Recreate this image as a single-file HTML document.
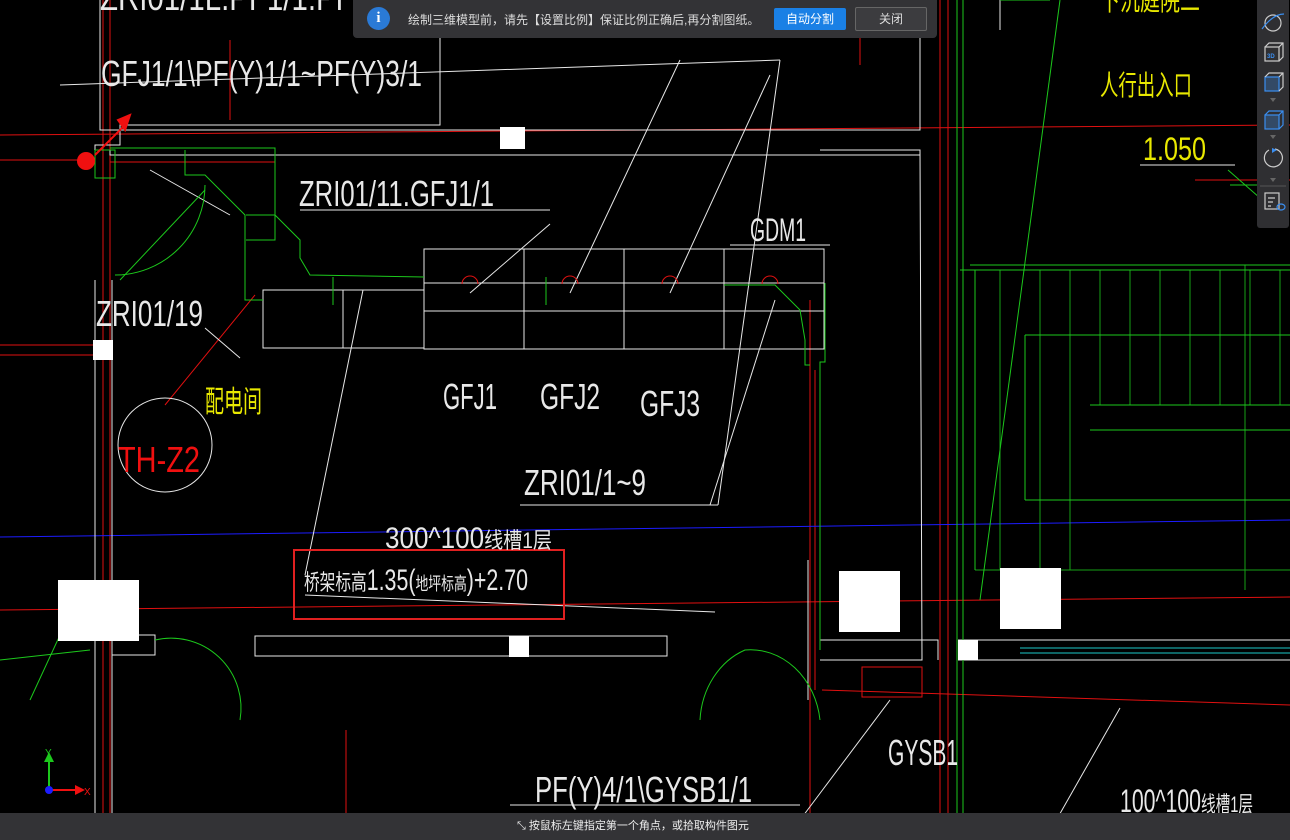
<!DOCTYPE html>
<html><head><meta charset="utf-8"><style>
body{margin:0;width:1290px;height:840px;overflow:hidden;background:#000;font-family:"Liberation Sans","Noto Sans CJK SC",sans-serif}
svg{position:absolute;left:0;top:0}
.t{font-family:"Liberation Sans","Noto Sans CJK SC",sans-serif}
</style></head><body>
<svg width="1290" height="840" viewBox="0 0 1290 840">
<rect width="1290" height="840" fill="#000"/>
<g fill="none" stroke-width="1">
<g stroke="#e01010">
<line x1="0" y1="135" x2="1290" y2="125"/>
<line x1="0" y1="160" x2="95" y2="160"/>
<line x1="0" y1="610" x2="1290" y2="597"/>
<line x1="0" y1="345" x2="95" y2="345"/>
<line x1="0" y1="355" x2="95" y2="355"/>
<line x1="103" y1="0" x2="103" y2="840"/>
<line x1="110" y1="0" x2="110" y2="840"/>
<line x1="185" y1="150" x2="185" y2="165"/>
<line x1="275" y1="160" x2="275" y2="240"/>
<line x1="110" y1="162" x2="275" y2="162"/>
<line x1="255" y1="295" x2="165" y2="405"/>
<line x1="810" y1="300" x2="810" y2="840"/>
<line x1="815" y1="370" x2="815" y2="690"/>
<line x1="822" y1="690" x2="1290" y2="705"/>
<line x1="860" y1="0" x2="860" y2="65"/>
<line x1="940" y1="0" x2="940" y2="840"/>
<line x1="948" y1="0" x2="948" y2="840"/>
<line x1="1195" y1="180" x2="1290" y2="180"/>
<line x1="346" y1="730" x2="346" y2="840"/>
<line x1="230" y1="40" x2="230" y2="120"/>
<rect x="862" y="667" width="60" height="30"/>
</g>
<line x1="0" y1="537" x2="1290" y2="520" stroke="#1c1cff"/>
<g stroke="#e8e8e8">
<polyline points="95,175 95,145 120,145 120,125 440,125 440,20"/>
<polyline points="100,0 100,130 920,130 920,20"/>
<polyline points="95,280 95,840"/>
<polyline points="112,280 112,600"/>
<polyline points="112,640 112,840"/>
<polyline points="95,635 155,635 155,655 112,655"/>
<rect x="255" y="636" width="412" height="20"/>
<polyline points="820,150 920,150 922,660 820,660"/>
<polyline points="110,150 110,155 920,155"/>
<polyline points="820,640 938,640 938,660"/>
<rect x="424" y="249" width="400" height="100"/>
<line x1="524" y1="249" x2="524" y2="349"/>
<line x1="624" y1="249" x2="624" y2="349"/>
<line x1="724" y1="249" x2="724" y2="349"/>
<rect x="263" y="290" width="161" height="58"/>
<line x1="343" y1="290" x2="343" y2="348"/>
<line x1="424" y1="311" x2="824" y2="311"/>
<line x1="424" y1="283" x2="824" y2="283"/>
<line x1="60" y1="85" x2="780" y2="60"/>
<line x1="780" y1="60" x2="718" y2="505"/>
<line x1="718" y1="505" x2="520" y2="505"/>
<line x1="300" y1="210" x2="550" y2="210"/>
<line x1="550" y1="224" x2="470" y2="293"/>
<line x1="680" y1="60" x2="570" y2="293"/>
<line x1="770" y1="75" x2="670" y2="293"/>
<line x1="730" y1="245" x2="830" y2="245"/>
<line x1="775" y1="300" x2="710" y2="505"/>
<line x1="363" y1="290" x2="305" y2="575"/>
<line x1="150" y1="170" x2="230" y2="215"/>
<line x1="205" y1="328" x2="240" y2="358"/>
<line x1="305" y1="595" x2="715" y2="612"/>
<line x1="510" y1="805" x2="800" y2="805"/>
<line x1="800" y1="820" x2="890" y2="700"/>
<line x1="1045" y1="840" x2="1120" y2="708"/>
<line x1="808" y1="560" x2="808" y2="700"/>
<line x1="1000" y1="0" x2="1000" y2="30"/>
<line x1="1140" y1="165" x2="1235" y2="165"/>
<polyline points="958,640 1290,640"/>
<polyline points="958,660 1290,660"/>
<line x1="855" y1="0" x2="937" y2="0"/>
</g>
<circle cx="165" cy="445" r="47" stroke="#e8e8e8"/>
<g stroke="#1cc81c">
<polyline points="95,150 95,178 115,178 115,150 95,150"/>
<polyline points="110,148 275,148 275,215 300,240 300,258 310,275 424,277"/>
<polyline points="185,150 185,175 205,175 245,215 245,300 263,300"/>
<polyline points="246,215 275,215 275,240 246,240"/>
<polyline points="825,283 825,362 820,362 820,650"/>
<polyline points="724,285 775,285 800,310 805,340 805,365 810,365"/>
<line x1="333" y1="277" x2="333" y2="305"/>
<line x1="546" y1="277" x2="546" y2="305"/>
<line x1="1060" y1="0" x2="980" y2="600"/>
<line x1="960" y1="270" x2="1290" y2="270"/>
<line x1="970" y1="265" x2="1290" y2="265"/>
<line x1="975" y1="270" x2="975" y2="570"/>
<line x1="1025" y1="335" x2="1290" y2="335"/>
<line x1="1025" y1="335" x2="1025" y2="500"/>
<line x1="1025" y1="500" x2="1290" y2="500"/>
<line x1="1090" y1="405" x2="1290" y2="405"/>
<line x1="1090" y1="430" x2="1290" y2="430"/>
<line x1="1228" y1="170" x2="1260" y2="198"/>
<line x1="1230" y1="185" x2="1257" y2="185"/>
<line x1="957" y1="0" x2="957" y2="840"/>
<line x1="963" y1="0" x2="963" y2="840"/>
<path d="M115 275 A90 90 0 0 0 205 185"/>
<path d="M120 280 L205 190"/>
<path d="M0 660 L90 650"/>
<path d="M30 700 L60 635"/>
<path d="M155 640 A70 70 0 0 1 240 720"/>
<path d="M700 720 A70 80 0 0 1 745 650 A70 80 0 0 1 820 720"/>
<path d="M1000 0 L1050 0"/>
</g>
<g stroke="#1cc81c" opacity=".8">
<line x1="1000" y1="270" x2="1000" y2="570"/>
<line x1="1040" y1="270" x2="1040" y2="570"/>
<line x1="1070" y1="270" x2="1070" y2="570"/>
<line x1="1100" y1="270" x2="1100" y2="405"/>
<line x1="1130" y1="270" x2="1130" y2="405"/>
<line x1="1160" y1="270" x2="1160" y2="405"/>
<line x1="1190" y1="270" x2="1190" y2="405"/>
<line x1="1220" y1="270" x2="1220" y2="405"/>
<line x1="1250" y1="270" x2="1250" y2="405"/>
<line x1="1280" y1="270" x2="1280" y2="405"/>
<line x1="1245" y1="265" x2="1245" y2="590"/>
<line x1="975" y1="570" x2="1290" y2="570"/>
</g>
<line x1="1020" y1="648" x2="1290" y2="648" stroke="#1cc8c8"/>
<line x1="1020" y1="653" x2="1290" y2="653" stroke="#1cc8c8"/>
<g stroke="#e01010">
<path d="M462 284 A8 8 0 1 1 478 284"/>
<path d="M562 284 A8 8 0 1 1 578 284"/>
<path d="M662 284 A8 8 0 1 1 678 284"/>
<path d="M762 284 A8 8 0 1 1 778 284"/>
</g>
<rect x="294" y="550" width="270" height="69" stroke="#e02020" stroke-width="2"/>
</g>
<g fill="#fff">
<rect x="500" y="127" width="25" height="22"/>
<rect x="93" y="340" width="20" height="20"/>
<rect x="58" y="580" width="81" height="61"/>
<rect x="509" y="636" width="20" height="21"/>
<rect x="839" y="571" width="61" height="61"/>
<rect x="1000" y="568" width="61" height="61"/>
<rect x="958" y="640" width="20" height="20"/>
</g>
<circle cx="86" cy="161" r="9" fill="#f01010"/>
<path d="M95 155 L125 125 M118 120 L130 115 L125 130 Z" stroke="#f01010" fill="#f01010" stroke-width="2"/>
<g class="t" fill="#e8e8e8" font-size="36" lengthAdjust="spacingAndGlyphs">
<text x="101" y="86" textLength="321" lengthAdjust="spacingAndGlyphs">GFJ1/1\PF(Y)1/1~PF(Y)3/1</text>
<text x="299" y="206" textLength="195" lengthAdjust="spacingAndGlyphs">ZRI01/11.GFJ1/1</text>
<text x="750" y="241" font-size="32" textLength="56" lengthAdjust="spacingAndGlyphs">GDM1</text>
<text x="96" y="326" textLength="107" lengthAdjust="spacingAndGlyphs">ZRI01/19</text>
<text x="443" y="409" textLength="54" lengthAdjust="spacingAndGlyphs">GFJ1</text>
<text x="540" y="409" textLength="60" lengthAdjust="spacingAndGlyphs">GFJ2</text>
<text x="640" y="416" textLength="60" lengthAdjust="spacingAndGlyphs">GFJ3</text>
<text x="524" y="495" textLength="122" lengthAdjust="spacingAndGlyphs">ZRI01/1~9</text>
<text x="385" y="548" font-size="30" textLength="167" lengthAdjust="spacingAndGlyphs">300^100<tspan font-size="22">线槽1层</tspan></text>
<text x="304" y="590" font-size="30" textLength="224" lengthAdjust="spacingAndGlyphs"><tspan font-size="22">桥架标高</tspan>1.35(<tspan font-size="18">地坪标高</tspan>)+2.70</text>
<text x="888" y="765" textLength="70" lengthAdjust="spacingAndGlyphs">GYSB1</text>
<text x="535" y="802" textLength="217" lengthAdjust="spacingAndGlyphs">PF(Y)4/1\GYSB1/1</text>
<text x="1120" y="812" font-size="32" textLength="133" lengthAdjust="spacingAndGlyphs">100^100<tspan font-size="22">线槽1层</tspan></text>
<text x="100" y="10" textLength="270" lengthAdjust="spacingAndGlyphs">ZRI01/1L.PF1/1.PFL</text>
</g>
<g class="t" fill="#e8e800">
<text x="1100" y="95" font-size="28" textLength="92" lengthAdjust="spacingAndGlyphs">人行出入口</text>
<text x="1100" y="10" font-size="28" textLength="100" lengthAdjust="spacingAndGlyphs">下沉庭院二</text>
<text x="1143" y="160" font-size="32" textLength="63" lengthAdjust="spacingAndGlyphs">1.050</text>
<text x="205" y="412" font-size="30" textLength="57" lengthAdjust="spacingAndGlyphs">配电间</text>
</g>
<text class="t" x="118" y="472" font-size="36" fill="#f01010" textLength="82" lengthAdjust="spacingAndGlyphs">TH-Z2</text>
<line x1="49" y1="790" x2="49" y2="757" stroke="#1cc81c" stroke-width="2"/>
<path d="M44 762 L49 752 L54 762 Z" fill="#1cc81c"/>
<line x1="49" y1="790" x2="80" y2="790" stroke="#f01010" stroke-width="2"/>
<path d="M75 785 L85 790 L75 795 Z" fill="#f01010"/>
<circle cx="49" cy="790" r="4" fill="#1c1cff"/>
<text x="45" y="756" font-size="10" fill="#1cc81c" class="t">Y</text>
<text x="84" y="795" font-size="10" fill="#f01010" class="t">X</text>
</svg>

<div style="position:absolute;left:353px;top:0;width:584px;height:38px;background:#333336;border-radius:0 0 4px 4px">
<div style="position:absolute;left:14px;top:7px;width:23px;height:23px;border-radius:50%;background:#2a7ad6;color:#fff;font:bold 15px/23px 'Liberation Serif',serif;text-align:center">i</div>
<div style="position:absolute;left:55px;top:11px;font-size:12px;color:#ddd;white-space:nowrap">绘制三维模型前，请先【设置比例】保证比例正确后,再分割图纸。</div>
<div style="position:absolute;left:421px;top:8px;width:72px;height:22px;background:#1a80e5;border-radius:2px;color:#fff;font-size:12px;line-height:22px;text-align:center">自动分割</div>
<div style="position:absolute;left:502px;top:7px;width:70px;height:22px;background:#3c3c3f;border:1px solid #666;border-radius:2px;color:#ddd;font-size:12px;line-height:22px;text-align:center">关闭</div>
</div>
<div style="position:absolute;left:1257px;top:0;width:32px;height:228px;background:#2f2f32;border-radius:0 0 3px 3px">
<svg width="32" height="228" viewBox="0 0 32 228">
<g fill="none" stroke="#ccc" stroke-width="1.2">
<ellipse cx="16" cy="23" rx="8" ry="8"/>
<path d="M5 29 Q16 14 27 14" stroke="#3a8ef0"/>
<rect x="8" y="47" width="14" height="14"/><path d="M8 47 L12 43 L26 43 L26 57 L22 61 M22 47 L26 43"/>
<rect x="8" y="77" width="14" height="14" fill="#334a66" stroke="#3a8ef0"/><path d="M8 77 L12 73 L26 73 L26 87 L22 91 M22 77 L26 73"/>
<rect x="8" y="115" width="14" height="14" fill="#334a66" stroke="#3a8ef0"/><path d="M8 115 L12 111 L26 111 L26 125 L22 129 M22 115 L26 111" stroke="#3a8ef0"/>
<path d="M12 150 A9 9 0 1 0 18 149"/>
<rect x="8" y="193" width="14" height="16"/><path d="M11 198 H18 M11 202 H16 M11 206 H14"/>
<ellipse cx="24" cy="207" rx="4" ry="3" stroke="#3a8ef0"/>
</g>
<text x="10" y="58" font-size="6" fill="#3a8ef0" class="t" font-weight="bold">3D</text>
<path d="M15 148 L20 150 L15 153 Z" fill="#3a8ef0"/>
<g fill="#666"><path d="M13 98 L19 98 L16 102Z"/><path d="M13 135 L19 135 L16 139Z"/><path d="M13 178 L19 178 L16 182Z"/></g>
<line x1="3" y1="186" x2="29" y2="186" stroke="#555"/>
</svg>
</div>
<div style="position:absolute;left:0;top:813px;width:1290px;height:27px;background:#333336;color:#eee;font-size:11px;line-height:27px">
<span style="position:absolute;left:517px">⤡ 按鼠标左键指定第一个角点，或拾取构件图元</span>
</div>
</body></html>
